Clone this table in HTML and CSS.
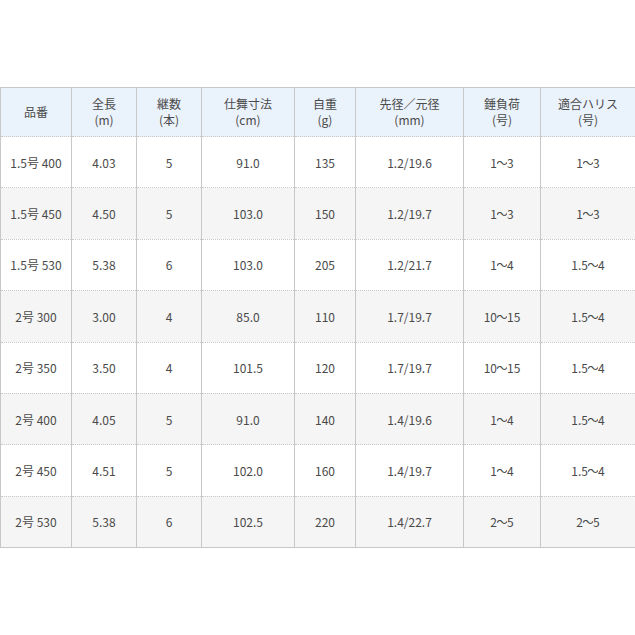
FILE: index.html
```html
<!DOCTYPE html>
<html lang="ja">
<head>
<meta charset="utf-8">
<link rel="stylesheet" href="styles.css">
</head>
<body>
<table class="spec">
<colgroup>
<col class="c1"><col class="c2"><col class="c3"><col class="c4"><col class="c5"><col class="c6"><col class="c7"><col class="c8">
</colgroup>
<thead>
<tr><th>品番</th><th>全長<br>(m)</th><th>継数<br>(本)</th><th>仕舞寸法<br>(cm)</th><th>自重<br>(g)</th><th>先径／元径<br>(mm)</th><th>錘負荷<br>(号)</th><th>適合ハリス<br>(号)</th></tr>
</thead>
<tbody>
<tr><td>1.5号 400</td><td>4.03</td><td>5</td><td>91.0</td><td>135</td><td>1.2/19.6</td><td>1<span class="w">〜</span>3</td><td>1<span class="w">〜</span>3</td></tr>
<tr><td>1.5号 450</td><td>4.50</td><td>5</td><td>103.0</td><td>150</td><td>1.2/19.7</td><td>1<span class="w">〜</span>3</td><td>1<span class="w">〜</span>3</td></tr>
<tr><td>1.5号 530</td><td>5.38</td><td>6</td><td>103.0</td><td>205</td><td>1.2/21.7</td><td>1<span class="w">〜</span>4</td><td>1.5<span class="w">〜</span>4</td></tr>
<tr><td>2号 300</td><td>3.00</td><td>4</td><td>85.0</td><td>110</td><td>1.7/19.7</td><td>10<span class="w">〜</span>15</td><td>1.5<span class="w">〜</span>4</td></tr>
<tr><td>2号 350</td><td>3.50</td><td>4</td><td>101.5</td><td>120</td><td>1.7/19.7</td><td>10<span class="w">〜</span>15</td><td>1.5<span class="w">〜</span>4</td></tr>
<tr><td>2号 400</td><td>4.05</td><td>5</td><td>91.0</td><td>140</td><td>1.4/19.6</td><td>1<span class="w">〜</span>4</td><td>1.5<span class="w">〜</span>4</td></tr>
<tr><td>2号 450</td><td>4.51</td><td>5</td><td>102.0</td><td>160</td><td>1.4/19.7</td><td>1<span class="w">〜</span>4</td><td>1.5<span class="w">〜</span>4</td></tr>
<tr><td>2号 530</td><td>5.38</td><td>6</td><td>102.5</td><td>220</td><td>1.4/22.7</td><td>2<span class="w">〜</span>5</td><td>2<span class="w">〜</span>5</td></tr>
</tbody>
</table>
</body>
</html>
```
FILE: styles.css
```css
html, body {
  margin: 0;
  padding: 0;
  background: #fff;
}
body {
  padding-top: 87px;
  font-family: "Noto Sans CJK JP", "Noto Sans", sans-serif;
  font-size: 12px;
  color: #4a4a4a;
}
.spec {
  border-collapse: collapse;
  table-layout: fixed;
  width: 635px;
  border: 1px solid #c8c8c8;
}
.c1 { width: 71px; }
.c2 { width: 65px; }
.c3 { width: 65px; }
.c4 { width: 93px; }
.c5 { width: 61px; }
.c6 { width: 108px; }
.c7 { width: 77px; }
.c8 { width: 95px; }
.spec th, .spec td {
  border-left: 1px solid #c8c8c8;
  border-right: 1px solid #c8c8c8;
  border-bottom: 1px dotted #c8c8c8;
  text-align: center;
  vertical-align: middle;
  padding: 0;
  font-weight: normal;
}
.spec th {
  background: #eaf2fc;
  height: 48px;
  line-height: 16px;
}
.spec td {
  height: 50.4px;
}
.w {
  display: inline-block;
  width: 10px;
  overflow: hidden;
  vertical-align: bottom;
  text-indent: -1px;
}
.spec tbody tr:nth-child(even) td {
  background: #f5f5f5;
}
.spec tbody tr:last-child td {
  border-bottom: 1px solid #c8c8c8;
}
```
